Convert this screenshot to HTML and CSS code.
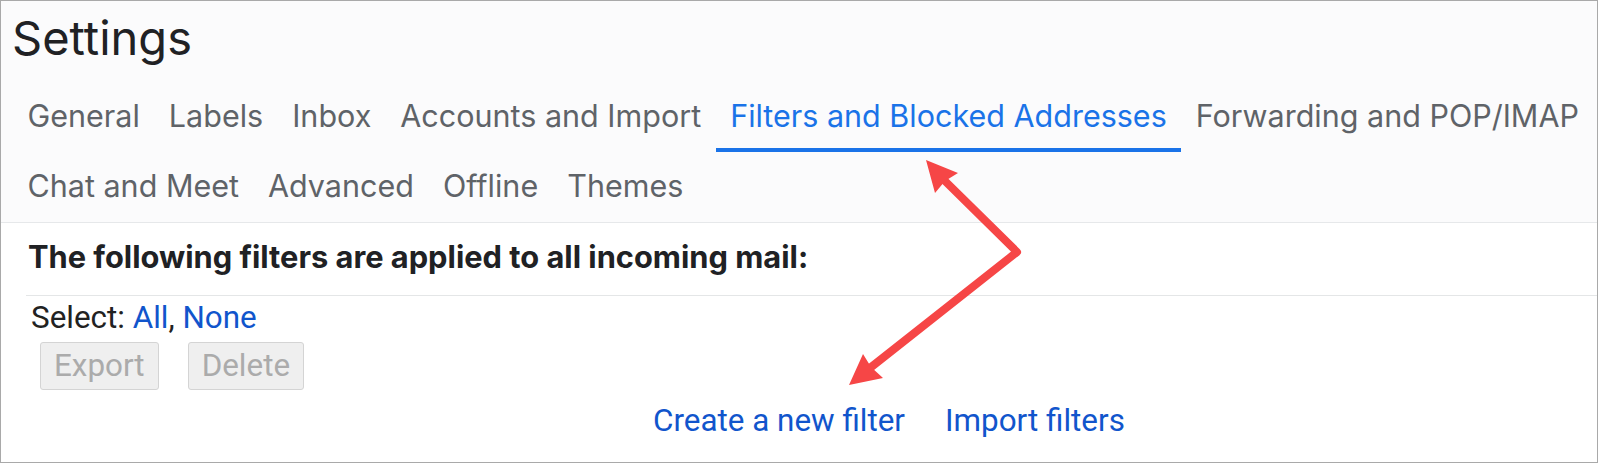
FILE: index.html
```html
<!DOCTYPE html>
<html lang="en">
<head>
<meta charset="utf-8">
<title>Settings - Filters and Blocked Addresses</title>
<link rel="stylesheet" href="styles.css">
</head>
<body>
<div class="frame">
  <header class="head">
    <h1 class="title">Settings</h1>
    <nav class="tabs">
      <div class="tab-row">
        <a class="tab">General</a>
        <a class="tab">Labels</a>
        <a class="tab">Inbox</a>
        <a class="tab">Accounts and Import</a>
        <a class="tab active">Filters and Blocked Addresses</a>
        <a class="tab">Forwarding and POP/IMAP</a>
      </div>
      <div class="tab-row">
        <a class="tab">Chat and Meet</a>
        <a class="tab">Advanced</a>
        <a class="tab">Offline</a>
        <a class="tab">Themes</a>
      </div>
    </nav>
  </header>
  <main class="content">
    <div class="heading">The following filters are applied to all incoming mail:</div>
    <div class="list">
      <div class="select">Select: <a class="link">All</a>, <a class="link">None</a></div>
      <div class="actions">
        <button class="btn" disabled>Export</button>
        <button class="btn" disabled>Delete</button>
      </div>
      <div class="links">
        <a class="link">Create a new filter</a>
        <a class="link">Import filters</a>
      </div>
    </div>
  </main>
  <svg class="annot" width="1600" height="463" viewBox="0 0 1600 463" aria-hidden="true">
    <polyline points="944,180 1017,252 870,368" fill="none" stroke="#f64646" stroke-width="8" stroke-linejoin="round" stroke-linecap="butt"/>
    <polygon points="926,160 958,173 945,181 935,193" fill="#f64646"/>
    <polygon points="849,385 863,354 871,367 883,378" fill="#f64646"/>
  </svg>
</div>
</body>
</html>
```
FILE: styles.css
```css
body {
  margin: 0;
  background: #ffffff;
}

.frame {
  position: relative;
  width: 1598px;
  height: 463px;
  box-sizing: border-box;
  border: 1px solid #a9a9a9;
  background: #ffffff;
  overflow: hidden;
  font-family: Roboto, "Liberation Sans", Arial, sans-serif;
}

.head {
  background: #fbfbfc;
  border-bottom: 1px solid #e6e8ea;
}

.title {
  margin: 0;
  padding: 9px 0 0 11px;
  font-family: Inter, Roboto, sans-serif;
  font-weight: 400;
  font-size: 47px;
  line-height: 56px;
  color: #202124;
}

.tabs {
  margin-top: 16px;
  padding-left: 12px;
}

.tab-row {
  display: flex;
  height: 70px;
}

.tab {
  padding: 1px 14.5px 0;
  border-bottom: 4px solid transparent;
  font-family: Inter, Roboto, sans-serif;
  font-size: 30.5px;
  line-height: 65px;
  color: #5f6368;
  white-space: nowrap;
}

.tab.active {
  color: #1a73e8;
  border-bottom-color: #1a73e8;
}

.content {
  padding-left: 27px;
}

.heading {
  height: 72px;
  font-family: Inter, Roboto, sans-serif;
  font-weight: 700;
  font-size: 30.8px;
  line-height: 68px;
  color: #202124;
  white-space: nowrap;
}

.list {
  margin-left: -2px;
  padding-left: 5px;
  border-top: 1px solid #e4e6e7;
}

.select {
  padding-top: 2px;
  font-size: 31.4px;
  line-height: 40px;
  color: #222222;
}

.link {
  color: #1155cc;
}

.actions {
  display: flex;
  gap: 29px;
  margin-top: 4px;
  padding-left: 9px;
}

.btn {
  height: 48px;
  box-sizing: border-box;
  padding: 0 13px;
  border: 1px solid #d4d4d4;
  border-radius: 3px;
  background: #efefef;
  color: #ababab;
  font-family: Roboto, "Liberation Sans", Arial, sans-serif;
  font-size: 31.4px;
  line-height: 46px;
}

.links {
  display: flex;
  gap: 40px;
  margin-top: 11px;
  padding-left: 622px;
  font-size: 31.4px;
  line-height: 40px;
}

.annot {
  position: absolute;
  top: -1px;
  left: -1px;
  pointer-events: none;
}
```
